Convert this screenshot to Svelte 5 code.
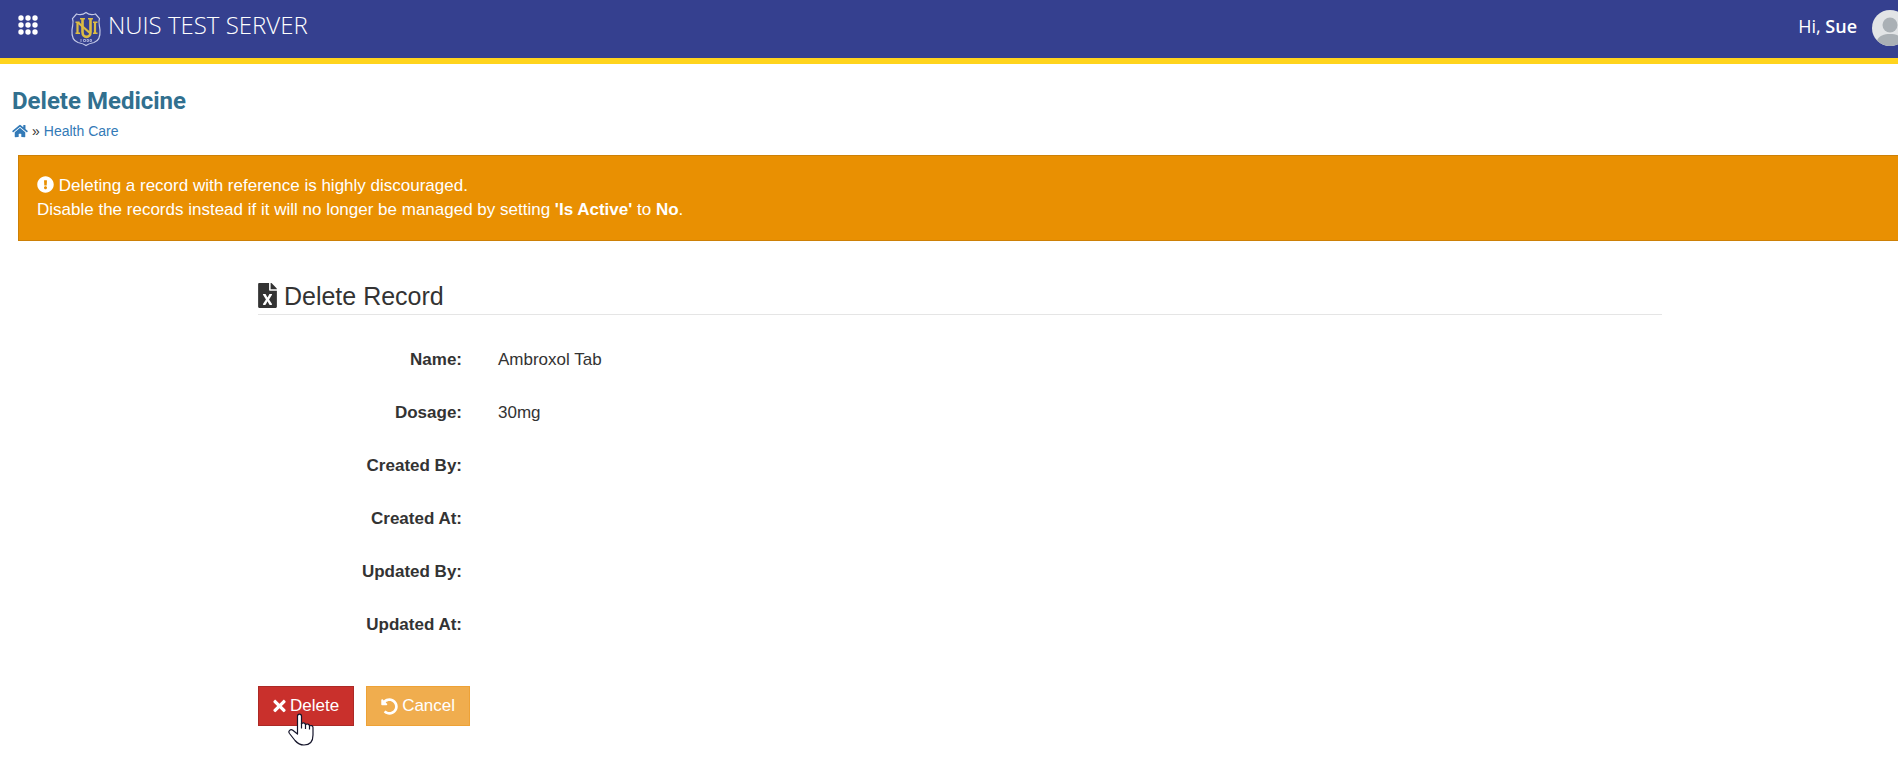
<script>
    const fields = [
        { label: 'Name', value: 'Ambroxol Tab' },
        { label: 'Dosage', value: '30mg' },
        { label: 'Created By', value: '' },
        { label: 'Created At', value: '' },
        { label: 'Updated By', value: '' },
        { label: 'Updated At', value: '' }
    ];
    const dots = [3, 10, 17];
</script>

<div class="viewport">
    <div class="page">
        <header class="navbar">
            <button class="menu-toggle" aria-label="Menu">
                <svg width="20" height="20" viewBox="0 0 20 20" fill="#fff">
                    {#each dots as cy}
                        {#each dots as cx}
                            <circle {cx} {cy} r="2.7" />
                        {/each}
                    {/each}
                </svg>
            </button>
            <a class="brand" href="/">
                <svg width="32" height="36" viewBox="0 0 32 36" fill="none">
                    <path d="M16 1.5 C13.500 3.500 9.500 4 6.500 3 L2.500 7.500 C4 11 2.500 14 2 19 C1.500 26 3.500 30 8 31.500 C11.500 32.300 14 33 16 34.500 C18 33 20.500 32.300 24 31.500 C28.500 30 30.500 26 30 19 C29.500 14 28 11 29.500 7.500 L25.500 3 C22.500 4 18.500 3.500 16 1.500 Z" stroke="#c3c8e6" stroke-width="1.2" />
                    <g stroke="#dcbc44">
                        <path d="M7.500 11.500 V22 M25 11.500 V22" stroke-width="2.2" />
                        <path d="M5.500 11.300 H9.500 M5.500 22.300 H10 M23 11.300 H27.500 M23 22.300 H27.500" stroke-width="1.4" />
                        <path d="M8 11.500 L20.500 22.500" stroke-width="2.2" />
                        <path d="M12.500 8 V21 C12.500 27.500 20.500 27.500 20.500 21 V8" stroke-width="2.6" />
                        <path d="M10 7.800 H15 M18 7.800 H23" stroke-width="1.4" />
                    </g>
                    <path d="M11 28 V31 M13.500 28.500 H15.500 V30.500 H13.500 Z M17 28.500 H18.500 V30.500 H17 Z M20 28.500 H21.500 V30.500 H20 Z" stroke="#a9afd8" stroke-width="0.9" />
                </svg>
                <span>NUIS TEST SERVER</span>
            </a>
            <div class="user">
                <span class="greeting">Hi, <b>Sue</b></span>
                <svg class="avatar" width="36" height="36" viewBox="0 0 36 36">
                    <circle cx="18" cy="18" r="18" fill="#e2e4e6" />
                    <circle cx="18" cy="15" r="7.500" fill="#aab0b5" />
                    <path d="M5 30.500 C7 25.500 12 24 18 24 S29 25.500 31 30.500 A18 18 0 0 1 5 30.500 Z" fill="#aab0b5" />
                </svg>
            </div>
        </header>

        <div class="page-title">
            <h1>Delete Medicine</h1>
            <nav class="breadcrumb">
                <a href="/" aria-label="Home">
                    <svg width="16" height="14" viewBox="0 0 576 512" fill="currentColor">
                        <path d="M280.370 148.260L96 300.110V464a16 16 0 0 0 16 16l112.060-.29a16 16 0 0 0 15.920-16V368a16 16 0 0 1 16-16h64a16 16 0 0 1 16 16v95.640a16 16 0 0 0 16 16.050L464 480a16 16 0 0 0 16-16V300L295.670 148.260a12.190 12.190 0 0 0-15.300 0zM571.600 251.470L488 182.560V44.050a12 12 0 0 0-12-12h-56a12 12 0 0 0-12 12v72.610L318.470 43a48 48 0 0 0-61 0L4.340 251.470a12 12 0 0 0-1.600 16.900l25.500 31A12 12 0 0 0 45.150 301l235.220-193.740a12.190 12.190 0 0 1 15.300 0L530.900 301a12 12 0 0 0 16.900-1.600l25.500-31a12 12 0 0 0-1.700-16.930z" />
                    </svg>
                </a>
                <span>»</span>
                <a href="/health-care">Health Care</a>
            </nav>
        </div>

        <div class="alert" role="alert">
            <svg class="icon" width="17" height="17" viewBox="0 0 512 512" fill="currentColor">
                <path d="M504 256c0 136.997-111.043 248-248 248S8 392.997 8 256C8 119.083 119.043 8 256 8s248 111.083 248 248zm-248 50c-25.405 0-46 20.595-46 46s20.595 46 46 46 46-20.595 46-46-20.595-46-46-46zm-43.673-165.346l7.418 136c.347 6.364 5.609 11.346 11.982 11.346h48.546c6.373 0 11.635-4.982 11.982-11.346l7.418-136c.375-6.874-5.098-12.654-11.982-12.654h-63.383c-6.884 0-12.356 5.780-11.981 12.654z" />
            </svg>
            Deleting a record with reference is highly discouraged.<br />
            Disable the records instead if it will no longer be managed by setting <b>'Is Active'</b> to <b>No</b>.
        </div>

        <main class="record">
            <h2>
                <svg class="icon" width="19" height="25" viewBox="0 0 384 512" fill="currentColor">
                    <path d="M224 136V0H24C10.700 0 0 10.700 0 24v464c0 13.300 10.700 24 24 24h336c13.300 0 24-10.700 24-24V160H248c-13.200 0-24-10.800-24-24zm60.100 106.500L224 336l60.100 93.500c5.100 8-.6 18.500-10.100 18.500h-34.900c-4.400 0-8.500-2.400-10.600-6.300C208.900 405.500 192 373 192 373c-6.400 14.800-10 20-36.600 68.800-2.100 3.900-6.100 6.300-10.500 6.300H110c-9.500 0-15.200-10.500-10.100-18.500l60.300-93.500-60.300-93.500c-5.200-8 .6-18.500 10.100-18.500h34.800c4.400 0 8.500 2.400 10.600 6.300 26.100 48.800 20 33.600 36.600 68.500 0 0 6.100-11.700 36.600-68.500 2.100-3.900 6.200-6.300 10.600-6.300H274c9.500-.1 15.200 10.400 10.100 18.400zM384 121.900v6.100H256V0h6.100c6.400 0 12.500 2.500 17 7l97.900 98c4.500 4.500 7 10.600 7 16.900z" />
                </svg>
                Delete Record
            </h2>
            <dl>
                {#each fields as field}
                    <div class="field">
                        <dt>{field.label}:</dt>
                        <dd>{field.value}</dd>
                    </div>
                {/each}
            </dl>
            <div class="actions">
                <button class="btn btn-danger">
                    <svg width="13" height="18" viewBox="0 0 352 512" fill="currentColor">
                        <path d="M242.720 256l100.070-100.070c12.280-12.280 12.280-32.190 0-44.480l-22.240-22.240c-12.280-12.280-32.190-12.280-44.480 0L176 189.280 75.930 89.210c-12.280-12.280-32.190-12.280-44.480 0L9.210 111.450c-12.280 12.280-12.280 32.190 0 44.480L109.280 256 9.210 356.070c-12.280 12.280-12.280 32.190 0 44.480l22.240 22.240c12.280 12.280 32.200 12.280 44.480 0L176 322.720l100.070 100.070c12.280 12.280 32.200 12.280 44.480 0l22.240-22.240c12.280-12.280 12.280-32.190 0-44.480L242.720 256z" />
                    </svg>
                    Delete
                    <svg class="pointer" width="26" height="33" viewBox="0 0 26 33">
                        <path d="M9.500 19 V3.200 C9.500 0.300 13.500 0.300 13.500 3.200 V11 C14 9.300 17.500 9.400 17.500 11.800 C18.500 10.500 21.500 10.800 21.500 13 C22.800 12 25 12.600 25 14.500 V22 C25 28.500 21.500 32 16 32 C11.500 32 9.500 30.500 7 27.500 L1.500 20.500 C-0.300 18 2.500 15.800 4.800 17.200 L9.500 21 Z" fill="#fff" stroke="#14142a" stroke-width="1.200" stroke-linejoin="round" />
                        <path d="M13.500 10 V15.500 M17.500 11.500 V16 M21.500 12.500 V16.500" stroke="#14142a" stroke-width="1.200" />
                    </svg>
                </button>
                <button class="btn btn-warning">
                    <svg width="17" height="17" viewBox="0 0 512 512" fill="currentColor">
                        <path d="M255.545 8c-66.269.119-126.438 26.233-170.860 68.685L48.971 40.971C33.851 25.851 8 36.559 8 57.941V192c0 13.255 10.745 24 24 24h134.059c21.382 0 32.090-25.851 16.971-40.971l-41.750-41.750c30.864-28.899 70.801-44.907 113.230-45.273 92.398-.798 170.283 73.977 169.484 169.442C423.236 348.009 349.816 424 256 424c-41.127 0-79.997-14.678-110.630-41.556-4.743-4.161-11.906-3.908-16.368.553L89.340 422.659c-4.872 4.872-4.631 12.815.482 17.433C133.798 479.813 192.074 504 256 504c136.966 0 247.999-111.033 248-247.998C504.001 119.193 392.354 7.755 255.545 8z" />
                    </svg>
                    Cancel
                </button>
            </div>
        </main>
    </div>
</div>

<style>
    :global(body) {
        margin: 0;
        background: #fff;
    }

    .viewport {
        overflow: hidden;
    }

    /* wider than the window by the scrollbar gutter */
    .page {
        width: calc(100% + 22px);
        color: #333;
        font-family: Arial, "Liberation Sans", sans-serif;
        font-size: 17px;
        line-height: 24px;
    }

    .page * {
        box-sizing: border-box;
    }

    a {
        color: #337ab7;
        text-decoration: none;
    }

    button {
        font: inherit;
        cursor: pointer;
    }

    .navbar {
        display: flex;
        align-items: center;
        height: 64px;
        padding: 0 12px 0 16px;
        border-bottom: 6px solid #ffd41d;
        background: #35408f;
        color: #fff;
        font-family: "Open Sans", "Noto Sans", sans-serif;
    }

    .menu-toggle {
        display: flex;
        margin: 0 30px 8px 0;
        padding: 2px;
        border: 0;
        background: none;
    }

    .brand {
        display: flex;
        align-items: center;
        gap: 6px;
        color: #fff;
        font-size: 24px;
        font-weight: 300;
    }

    .brand span {
        padding-bottom: 8px;
    }

    .user {
        display: flex;
        align-items: center;
        gap: 15px;
        margin-left: auto;
        font-size: 18px;
        font-weight: 400;
    }

    .avatar {
        margin-bottom: 2px;
    }

    .greeting {
        padding-bottom: 6px;
    }

    .user b {
        font-weight: 600;
    }

    .page-title {
        padding: 20px 12px 12px;
    }

    h1 {
        margin: 0;
        color: #31708f;
        font-family: Roboto, sans-serif;
        font-size: 24px;
        font-weight: 700;
        line-height: 35px;
    }

    .breadcrumb {
        display: flex;
        align-items: center;
        gap: 4px;
        font-size: 14px;
    }

    .breadcrumb svg {
        display: block;
    }

    .alert {
        margin-left: 18px;
        padding: 18px;
        border: 1px solid #cd8006;
        background: #e99002;
        color: #fff;
    }

    .icon {
        vertical-align: -2px;
    }

    .record {
        width: 75%;
        margin: 38px auto 0;
        padding: 0 18px 36px;
    }

    h2 {
        margin: 0 0 18px;
        border-bottom: 1px solid #e5e5e5;
        font-size: 25px;
        font-weight: 400;
        line-height: 35px;
    }

    h2 .icon {
        vertical-align: -3px;
    }

    dl {
        margin: 0 -18px;
    }

    .field {
        display: flex;
        height: 53px;
        align-items: center;
    }

    dt {
        width: calc(100% / 6);
        padding: 0 18px;
        font-weight: 700;
        text-align: right;
    }

    dd {
        margin: 0;
        padding: 0 18px;
    }

    .actions {
        display: flex;
        gap: 12px;
        margin-top: 35px;
    }

    .btn {
        position: relative;
        display: flex;
        align-items: center;
        gap: 4px;
        height: 40px;
        padding: 0 14px;
        border: 1px solid;
        color: #fff;
    }

    .btn-danger {
        border-color: #ac2925;
        background: #c9302c;
    }

    .btn-warning {
        border-color: #eea236;
        background: #f0ad4e;
    }

    .pointer {
        position: absolute;
        top: 26px;
        left: 29px;
    }
</style>
